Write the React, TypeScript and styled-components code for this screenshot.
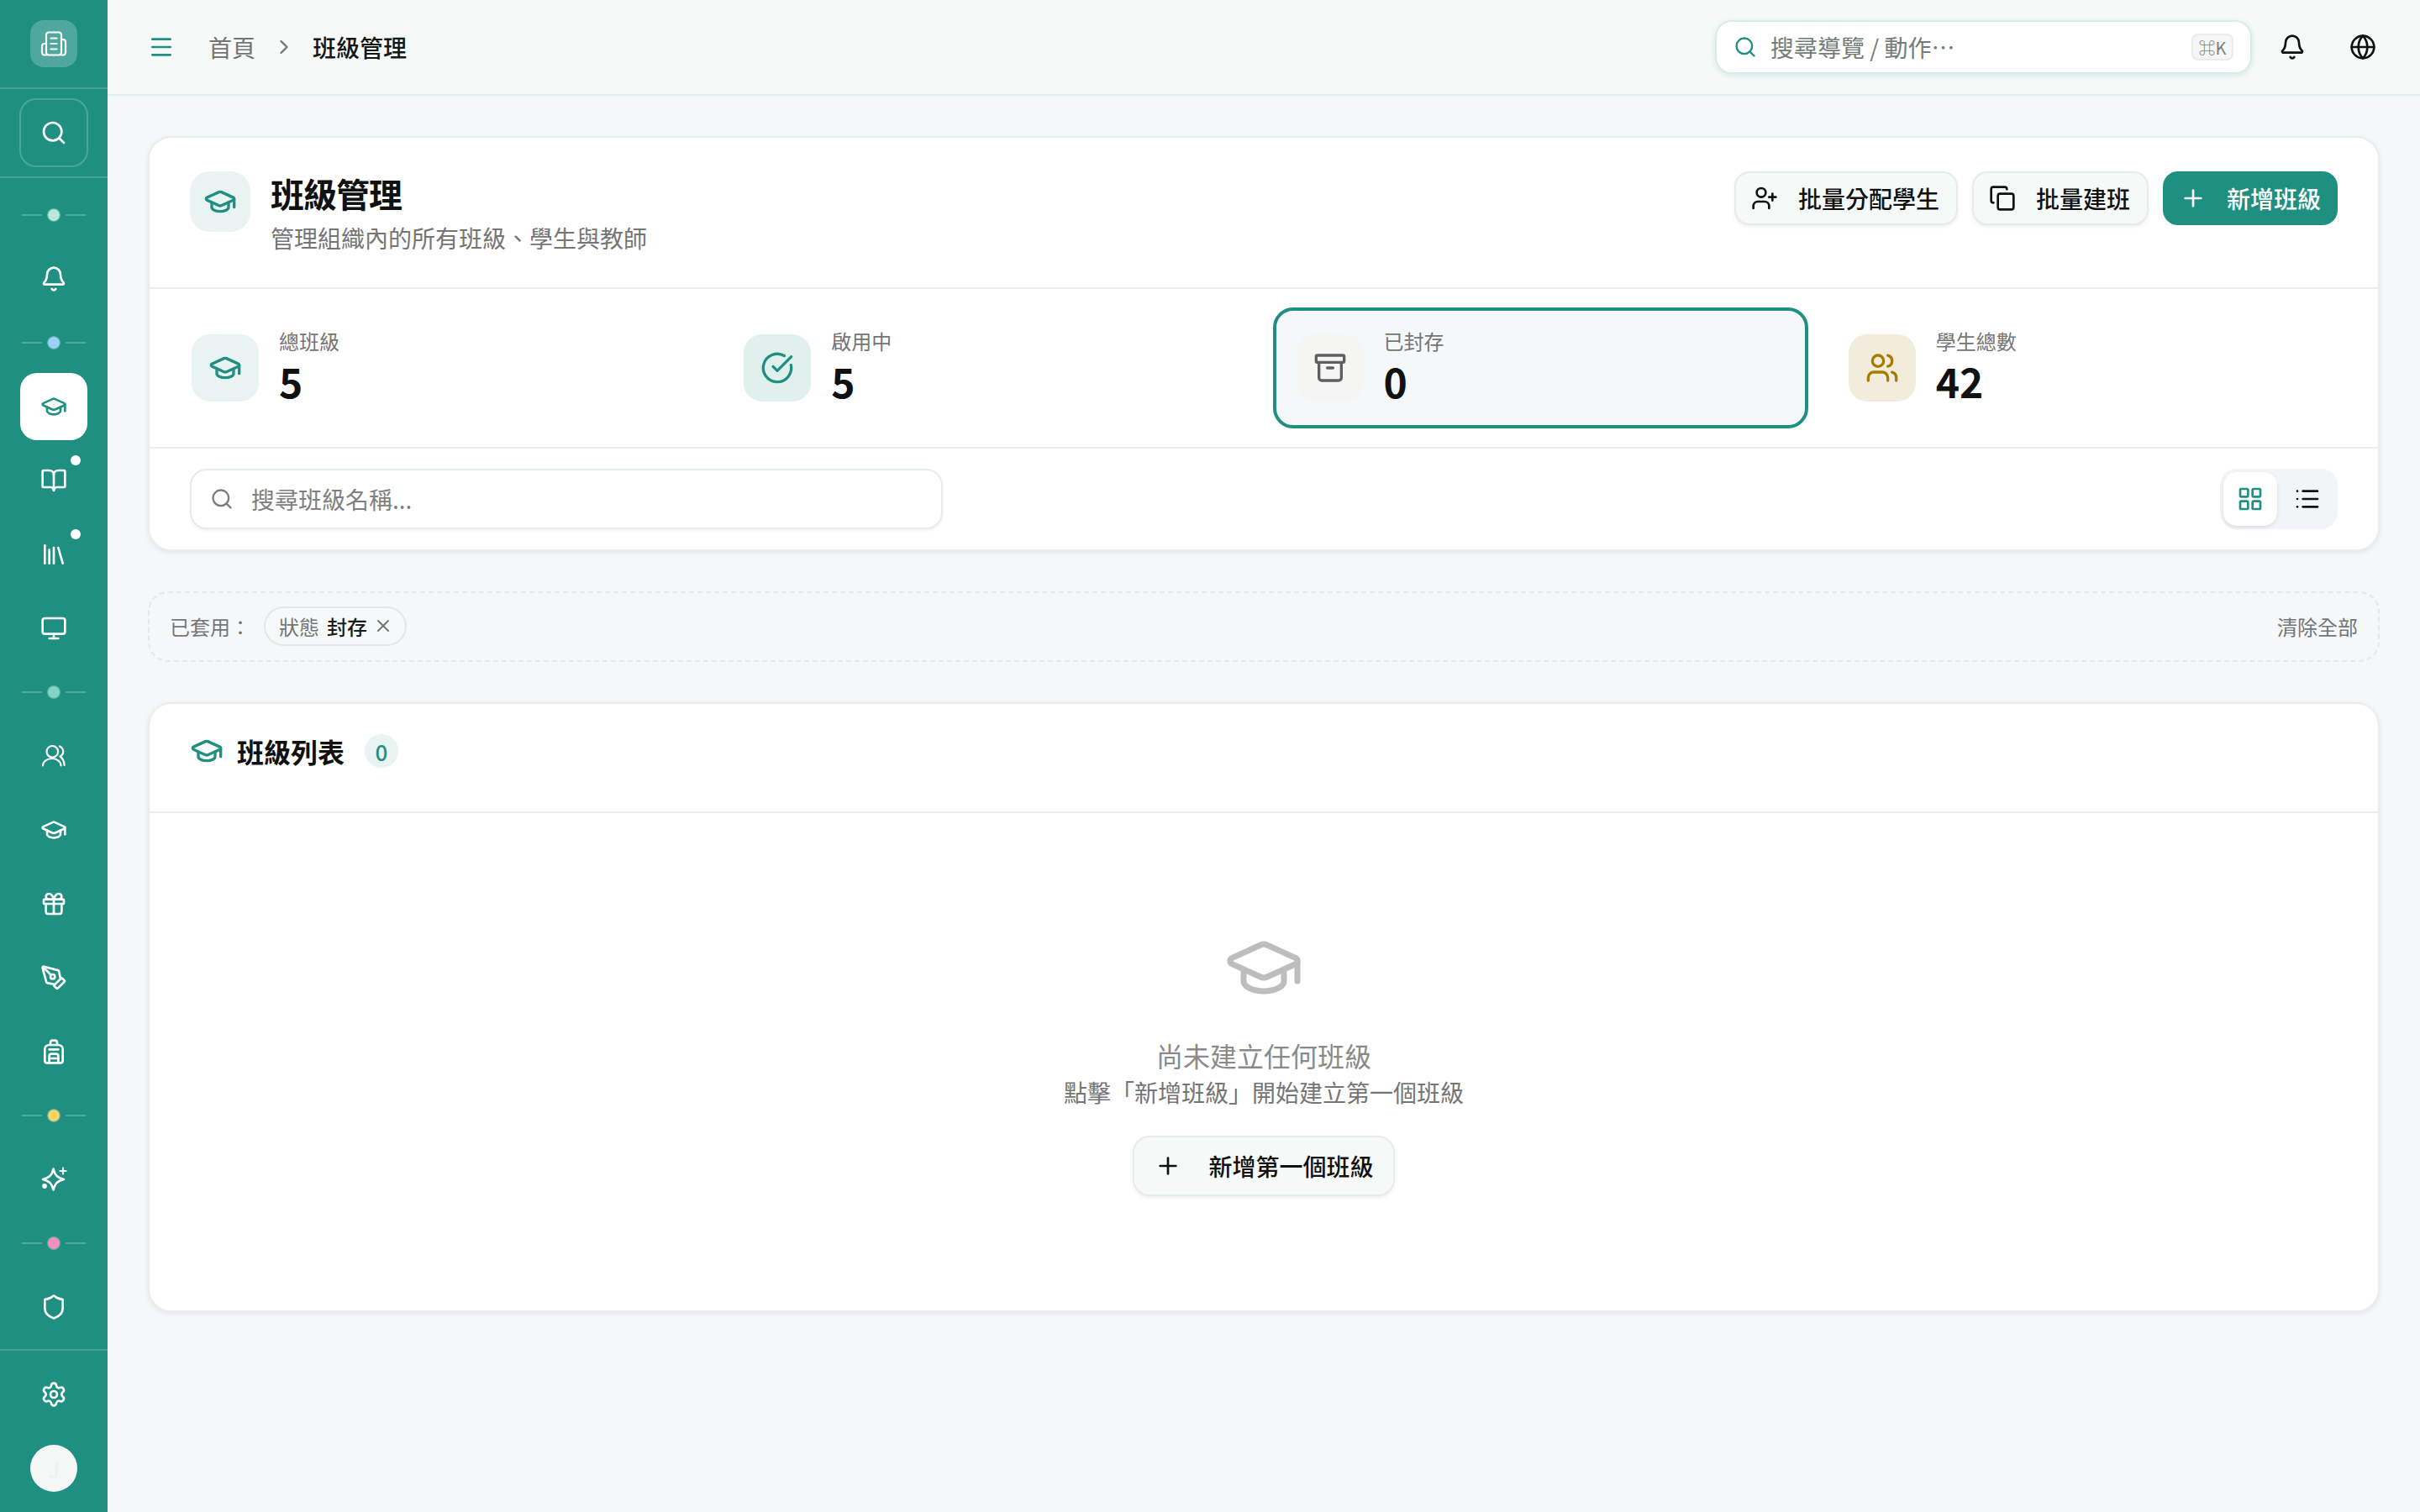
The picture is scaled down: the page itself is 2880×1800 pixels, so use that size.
import React from "react";
import styled, { createGlobalStyle } from "styled-components";
import {
  Archive, Backpack, Bell, BookOpen, CircleCheckBig, Copy, Gift, Globe, GraduationCap,
  LayoutGrid, Library, List, Menu, Monitor, PenTool, Plus, Search, Settings, Shield,
  ChevronRight, UserPlus, Users, X,
} from "lucide-react";

const FONT = `"Noto Sans CJK TC", "Noto Sans", sans-serif`;
const TEAL = "#1f8f82";

const Global = createGlobalStyle`
  html, body { margin: 0; padding: 0; background: #f5f8f8; }
  body { font-family: ${FONT}; color: #111; }
  * { box-sizing: border-box; }
`;

const Shell = styled.div`
  display: grid;
  grid-template-columns: 128px 1fr;
  min-height: 1800px;
`;

const Rail = styled.aside`
  background: ${TEAL};
  display: flex;
  flex-direction: column;
  height: 1800px;
  color: #fff;
`;

const RailTop = styled.div`
  height: 106px;
  display: flex;
  align-items: flex-start;
  justify-content: center;
  padding-top: 24px;
  border-bottom: 2px solid rgba(255, 255, 255, 0.16);
`;

const LogoBox = styled.div`
  width: 56px;
  height: 56px;
  border-radius: 16px;
  background: rgba(255, 255, 255, 0.22);
  display: flex;
  align-items: center;
  justify-content: center;
`;

const RailSearch = styled.div`
  height: 106px;
  padding-top: 11px;
  display: flex;
  justify-content: center;
  border-bottom: 2px solid rgba(255, 255, 255, 0.16);
`;

const RailSearchBox = styled.div`
  width: 82px;
  height: 82px;
  border-radius: 20px;
  border: 2px solid rgba(255, 255, 255, 0.2);
  display: flex;
  align-items: center;
  justify-content: center;
`;

const RailNav = styled.nav`
  flex: 1;
  padding-top: 8px;
  display: flex;
  flex-direction: column;
  align-items: center;
`;

const RailItem = styled.div<{ $active?: boolean }>`
  position: relative;
  width: 80px;
  height: 80px;
  margin-bottom: 8px;
  border-radius: 20px;
  display: flex;
  align-items: center;
  justify-content: center;
  background: ${(p) => (p.$active ? "#fff" : "transparent")};
  color: ${(p) => (p.$active ? TEAL : "#fff")};
`;

const NotifyDot = styled.span`
  position: absolute;
  top: 10px;
  right: 8px;
  width: 12px;
  height: 12px;
  border-radius: 50%;
  background: #fff;
`;

const Section = styled.div`
  width: 76px;
  height: 72px;
  margin-top: -8px;
  display: flex;
  align-items: center;
  gap: 6px;
  &::before, &::after {
    content: "";
    flex: 1;
    height: 2px;
    background: rgba(255, 255, 255, 0.22);
  }
`;

const SectionFirst = styled(Section)`
  margin-top: 0;
`;

const SectionDot = styled.span<{ $color: string }>`
  width: 16px;
  height: 16px;
  border-radius: 50%;
  border: 1.5px solid rgba(255, 255, 255, 0.28);
  background: ${(p) => p.$color};
  background-clip: padding-box;
`;

const RailFoot = styled.div`
  border-top: 2px solid rgba(255, 255, 255, 0.16);
  height: 194px;
  padding-top: 12px;
  display: flex;
  flex-direction: column;
  align-items: center;
`;

const Avatar = styled.div`
  width: 56px;
  height: 56px;
  margin-top: 12px;
  border-radius: 50%;
  background: #f5f7f7;
  color: #eef1f1;
  font-size: 24px;
  display: flex;
  align-items: center;
  justify-content: center;
`;

const Main = styled.main`
  min-width: 0;
  display: flex;
  flex-direction: column;
`;

const TopBar = styled.header`
  height: 114px;
  padding: 0 52px 0 48px;
  background: #f5f9f8;
  border-bottom: 2px solid #e6eceb;
  display: flex;
  align-items: center;
`;

const MenuButton = styled.div`
  width: 32px;
  height: 32px;
  color: ${TEAL};
  display: flex;
`;

const Crumb = styled.span<{ $current?: boolean }>`
  font-size: 28px;
  line-height: 40px;
  color: ${(p) => (p.$current ? "#161616" : "#757575")};
  font-weight: ${(p) => (p.$current ? 500 : 400)};
`;

const Crumbs = styled.div`
  flex: 1;
  margin-left: 40px;
  display: flex;
  align-items: center;
  gap: 20px;
  color: #757575;
`;

const TopSearch = styled.div`
  width: 639px;
  height: 64px;
  padding: 0 20px;
  background: #fff;
  border: 2px solid #d9ece8;
  border-radius: 20px;
  box-shadow: 0 2px 6px rgba(31, 143, 130, 0.14);
  display: flex;
  align-items: center;
  gap: 16px;
  color: ${TEAL};
`;

const TopSearchText = styled.span`
  flex: 1;
  font-size: 28px;
  color: #747c7a;
`;

const Kbd = styled.kbd`
  flex: none;
  width: 50px;
  height: 32px;
  border-radius: 8px;
  border: 2px solid #e8ecea;
  background: #f5f7f6;
  color: #7c8280;
  font-family: ${FONT};
  font-size: 20px;
  display: flex;
  align-items: center;
  justify-content: center;
`;

const TopIcons = styled.div`
  margin-left: 32px;
  display: flex;
  gap: 52px;
  color: #111;
`;

const Content = styled.div`
  padding: 48px;
  display: flex;
  flex-direction: column;
  gap: 48px;
`;

const Card = styled.section`
  background: #fff;
  border: 2px solid #e9eeed;
  border-radius: 28px;
  box-shadow: 0 2px 6px rgba(0, 0, 0, 0.08);
  overflow: hidden;
`;

const PageHead = styled.div`
  padding: 40px 48px;
  height: 180px;
  border-bottom: 2px solid #e9eeed;
  display: flex;
  align-items: flex-start;
`;

const HeadIcon = styled.div`
  width: 72px;
  height: 72px;
  border-radius: 24px;
  background: #e9f3f2;
  color: ${TEAL};
  display: flex;
  align-items: center;
  justify-content: center;
`;

const HeadText = styled.div`
  flex: 1;
  margin: -3px 0 0 24px;
`;

const Title = styled.h1`
  margin: 0;
  font-size: 40px;
  line-height: 58px;
  font-weight: 700;
  letter-spacing: -1px;
`;

const Sub = styled.p`
  margin: 3px 0 0;
  font-size: 28px;
  line-height: 42px;
  color: #757575;
`;

const Actions = styled.div`
  display: flex;
  gap: 17px;
`;

const Btn = styled.button<{ $primary?: boolean }>`
  height: 64px;
  padding: ${(p) => (p.$primary ? "0 20px" : "0 20px 0 18px")};
  border-radius: 18px;
  border: ${(p) => (p.$primary ? "0" : "2px solid #e6eceb")};
  background: ${(p) => (p.$primary ? TEAL : "#f5f9f8")};
  color: ${(p) => (p.$primary ? "#fff" : "#111")};
  box-shadow: ${(p) => (p.$primary ? "none" : "0 2px 4px rgba(0, 0, 0, 0.07)")};
  font-family: ${FONT};
  font-size: 28px;
  font-weight: 500;
  display: flex;
  align-items: center;
  gap: 24px;
`;

const Stats = styled.div`
  padding: 22px 21px 22px 22px;
  border-bottom: 2px solid #e9eeed;
  display: grid;
  grid-template-columns: repeat(4, 1fr);
  gap: 20px;
`;

const Stat = styled.div<{ $selected?: boolean }>`
  height: 144px;
  padding: 0 24px;
  border-radius: 24px;
  border: 4px solid ${(p) => (p.$selected ? TEAL : "transparent")};
  background: ${(p) => (p.$selected ? "#f5f8f8" : "transparent")};
  display: flex;
  align-items: center;
  gap: 24px;
`;

const StatIcon = styled.div<{ $bg: string; $fg: string }>`
  width: 80px;
  height: 80px;
  border-radius: 22px;
  background: ${(p) => p.$bg};
  color: ${(p) => p.$fg};
  display: flex;
  align-items: center;
  justify-content: center;
`;

const StatText = styled.div`
  display: flex;
  flex-direction: column;
  padding-bottom: 2px;
`;

const StatLabel = styled.span`
  font-size: 24px;
  line-height: 32px;
  color: #757575;
`;

const StatValue = styled.span`
  font-size: 48px;
  line-height: 62px;
  font-weight: 700;
  color: #111;
`;

const Toolbar = styled.div`
  padding: 24px 48px;
  display: flex;
  align-items: center;
  justify-content: space-between;
`;

const SearchField = styled.div`
  width: 896px;
  height: 72px;
  padding: 0 22px;
  border: 2px solid #e6eceb;
  border-radius: 20px;
  background: #fff;
  box-shadow: 0 2px 3px rgba(0, 0, 0, 0.05);
  display: flex;
  align-items: center;
  gap: 21px;
  color: #7a7a7a;
`;

const SearchInput = styled.input`
  flex: 1;
  border: 0;
  padding: 0;
  outline: 0;
  background: transparent;
  font-family: ${FONT};
  font-size: 28px;
  color: #111;
  &::placeholder {
    color: #808080;
    opacity: 1;
  }
`;

const Toggle = styled.div`
  padding: 4px;
  border-radius: 20px;
  background: #f1f5f7;
  display: flex;
  gap: 4px;
`;

const ToggleBtn = styled.div<{ $on?: boolean }>`
  width: 64px;
  height: 64px;
  border-radius: 16px;
  background: ${(p) => (p.$on ? "#fff" : "transparent")};
  color: ${(p) => (p.$on ? TEAL : "#111")};
  box-shadow: ${(p) => (p.$on ? "0 2px 4px rgba(0, 0, 0, 0.1)" : "none")};
  display: flex;
  align-items: center;
  justify-content: center;
`;

const FilterBar = styled.div`
  height: 84px;
  padding: 0 24px 2px 24px;
  border: 2px dashed #e4e9e8;
  border-radius: 24px;
  background: #f5f8f8;
  display: flex;
  align-items: center;
  font-size: 24px;
  color: #757575;
`;

const FilterLabel = styled.span`
  width: 112px;
`;

const Chip = styled.div`
  height: 47px;
  padding: 0 14px 0 16px;
  border: 2px solid #e3e8e7;
  border-radius: 24px;
  background: #f6f9f9;
  display: flex;
  align-items: center;
  color: #757575;
`;

const ChipValue = styled.b`
  font-weight: 500;
  color: #1c1c1c;
  margin: 0 7px 0 9px;
`;

const Clear = styled.span`
  margin-left: auto;
`;

const ListHead = styled.div`
  height: 130px;
  padding: 0 48px 16px;
  border-bottom: 2px solid #e9eeed;
  display: flex;
  align-items: center;
  color: ${TEAL};
`;

const ListTitle = styled.h2`
  margin: 0 0 0 16px;
  font-size: 32px;
  line-height: 44px;
  font-weight: 700;
  color: #111;
`;

const Count = styled.span`
  width: 40px;
  height: 40px;
  margin-left: 24px;
  border-radius: 50%;
  background: #e9f3f2;
  color: ${TEAL};
  font-size: 26px;
  font-weight: 500;
  display: flex;
  align-items: center;
  justify-content: center;
`;

const Empty = styled.div`
  padding: 136px 0 136px;
  display: flex;
  flex-direction: column;
  align-items: center;
  color: #bdbdbd;
`;

const EmptyTitle = styled.h3`
  margin: 34px 0 2px;
  font-size: 32px;
  line-height: 44px;
  font-weight: 400;
  color: #8a8a8a;
`;

const EmptySub = styled.p`
  margin: 0 0 32px;
  font-size: 28px;
  line-height: 40px;
  color: #757575;
`;

const EmptyBtn = styled(Btn)`
  height: 72px;
  padding: 0 23px 0 24px;
  gap: 32px;
  border-radius: 20px;
`;

const LogoIcon = () => (
  <svg width="32" height="32" viewBox="0 0 32 32" fill="none" stroke="currentColor" strokeWidth="2.2" strokeLinecap="round" strokeLinejoin="round">
    <rect x="7" y="2.5" width="18" height="27" rx="3" />
    <path d="M7 16H5a3 3 0 0 0-3 3v7.5a3 3 0 0 0 3 3h2" />
    <path d="M25 11h2a3 3 0 0 1 3 3v12.5a3 3 0 0 1-3 3h-2" />
    <path d="M12.5 9.5h7M12.5 16h7M12.5 22.5h7" />
  </svg>
);

const TwoPeopleIcon = () => (
  <svg width="32" height="32" viewBox="0 0 32 32" fill="none" stroke="currentColor" strokeWidth="2.2" strokeLinecap="round" strokeLinejoin="round">
    <circle cx="14.3" cy="10.8" r="6.8" />
    <path d="M3 27.5C3 22.5 8 19 14 19c5.5 0 10.5 3.5 10.5 8.5" />
    <path d="M23 4.5c3 1.5 4.2 4 4.2 6.2 0 2.3-1.2 4.6-3.7 5.8 3 2 4.8 5.5 5.1 10.5" />
  </svg>
);

const SparkleIcon = () => (
  <svg width="32" height="32" viewBox="0 0 32 32" fill="none" stroke="currentColor" strokeWidth="2.6" strokeLinecap="round" strokeLinejoin="round">
    <path d="M15.5 3.5c1.4 7 4.5 10.6 12.5 12.5-8 1.9-11.1 5.5-12.5 12.5C14.1 21.5 11 17.9 3 16c8-1.9 11.1-5.5 12.5-12.5Z" />
    <path d="M27 2.5v7M23.5 6h7" strokeWidth="2.2" />
    <circle cx="5" cy="24" r="1.6" fill="currentColor" />
  </svg>
);

const sections = {
  green: "#b9ead9",
  blue: "#9bd0f8",
  teal: "#80d4c9",
  yellow: "#fcd265",
  pink: "#f48fc4",
};

export default function App() {
  return (
    <>
      <Global />
      <Shell>
        <Rail>
          <RailTop>
            <LogoBox>
              <LogoIcon />
            </LogoBox>
          </RailTop>
          <RailSearch>
            <RailSearchBox>
              <Search size={32} />
            </RailSearchBox>
          </RailSearch>
          <RailNav>
            <SectionFirst><SectionDot $color={sections.green} /></SectionFirst>
            <RailItem><Bell size={32} /></RailItem>
            <Section><SectionDot $color={sections.blue} /></Section>
            <RailItem $active><GraduationCap size={32} /></RailItem>
            <RailItem><BookOpen size={32} /><NotifyDot /></RailItem>
            <RailItem><Library size={32} /><NotifyDot /></RailItem>
            <RailItem><Monitor size={32} /></RailItem>
            <Section><SectionDot $color={sections.teal} /></Section>
            <RailItem><TwoPeopleIcon /></RailItem>
            <RailItem><GraduationCap size={32} /></RailItem>
            <RailItem><Gift size={32} /></RailItem>
            <RailItem><PenTool size={32} /></RailItem>
            <RailItem><Backpack size={32} /></RailItem>
            <Section><SectionDot $color={sections.yellow} /></Section>
            <RailItem><SparkleIcon /></RailItem>
            <Section><SectionDot $color={sections.pink} /></Section>
            <RailItem><Shield size={32} /></RailItem>
          </RailNav>
          <RailFoot>
            <RailItem><Settings size={32} /></RailItem>
            <Avatar>J</Avatar>
          </RailFoot>
        </Rail>
        <Main>
          <TopBar>
            <MenuButton><Menu size={32} /></MenuButton>
            <Crumbs>
              <Crumb>首頁</Crumb>
              <ChevronRight size={28} />
              <Crumb $current>班級管理</Crumb>
            </Crumbs>
            <TopSearch>
              <Search size={28} />
              <TopSearchText>搜尋導覽 / 動作…</TopSearchText>
              <Kbd>⌘K</Kbd>
            </TopSearch>
            <TopIcons>
              <Bell size={32} />
              <Globe size={32} />
            </TopIcons>
          </TopBar>
          <Content>
            <Card>
              <PageHead>
                <HeadIcon><GraduationCap size={40} /></HeadIcon>
                <HeadText>
                  <Title>班級管理</Title>
                  <Sub>管理組織內的所有班級、學生與教師</Sub>
                </HeadText>
                <Actions>
                  <Btn><UserPlus size={32} />批量分配學生</Btn>
                  <Btn><Copy size={32} />批量建班</Btn>
                  <Btn $primary><Plus size={32} />新增班級</Btn>
                </Actions>
              </PageHead>
              <Stats>
                <Stat>
                  <StatIcon $bg="#e9f3f2" $fg={TEAL}><GraduationCap size={40} /></StatIcon>
                  <StatText><StatLabel>總班級</StatLabel><StatValue>5</StatValue></StatText>
                </Stat>
                <Stat>
                  <StatIcon $bg="#dff0ed" $fg={TEAL}><CircleCheckBig size={40} /></StatIcon>
                  <StatText><StatLabel>啟用中</StatLabel><StatValue>5</StatValue></StatText>
                </Stat>
                <Stat $selected>
                  <StatIcon $bg="#f5f6f4" $fg="#5f5f5f"><Archive size={40} /></StatIcon>
                  <StatText><StatLabel>已封存</StatLabel><StatValue>0</StatValue></StatText>
                </Stat>
                <Stat>
                  <StatIcon $bg="#f3ebdc" $fg="#a67c00"><Users size={40} /></StatIcon>
                  <StatText><StatLabel>學生總數</StatLabel><StatValue>42</StatValue></StatText>
                </Stat>
              </Stats>
              <Toolbar>
                <SearchField>
                  <Search size={28} />
                  <SearchInput placeholder="搜尋班級名稱..." readOnly />
                </SearchField>
                <Toggle>
                  <ToggleBtn $on><LayoutGrid size={32} /></ToggleBtn>
                  <ToggleBtn><List size={32} /></ToggleBtn>
                </Toggle>
              </Toolbar>
            </Card>
            <FilterBar>
              <FilterLabel>已套用：</FilterLabel>
              <Chip>狀態<ChipValue>封存</ChipValue><X size={24} /></Chip>
              <Clear>清除全部</Clear>
            </FilterBar>
            <Card>
              <ListHead>
                <GraduationCap size={40} />
                <ListTitle>班級列表</ListTitle>
                <Count>0</Count>
              </ListHead>
              <Empty>
                <GraduationCap size={96} strokeWidth={1.75} />
                <EmptyTitle>尚未建立任何班級</EmptyTitle>
                <EmptySub>點擊「新增班級」開始建立第一個班級</EmptySub>
                <EmptyBtn><Plus size={32} />新增第一個班級</EmptyBtn>
              </Empty>
            </Card>
          </Content>
        </Main>
      </Shell>
    </>
  );
}
